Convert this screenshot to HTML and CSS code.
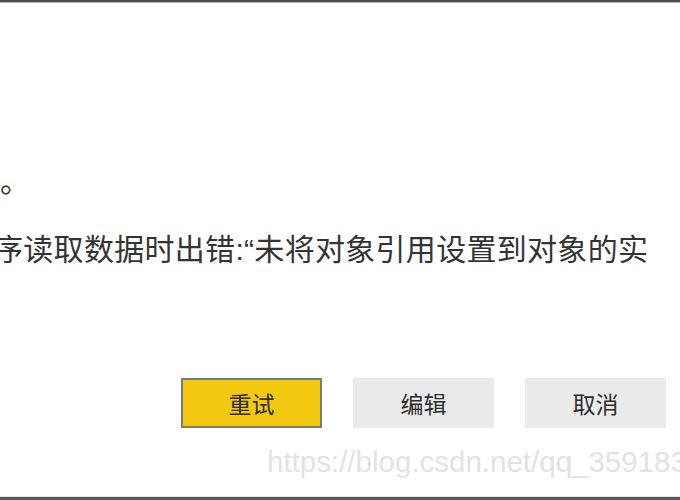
FILE: index.html
```html
<!DOCTYPE html>
<html lang="zh-CN">
<head>
    <meta charset="UTF-8">
    <meta name="viewport" content="width=device-width, initial-scale=1.0">
    <title>错误</title>
    <link rel="stylesheet" href="styles.css">
</head>
<body>
    <div class="dialog">
        <!-- 错误信息 -->
        <div class="message">
            <p class="line-end">。</p>
            <p class="line-error">序读取数据时出错<span class="punct">:“</span>未将对象引用设置到对象的实</p>
        </div>

        <!-- 按钮 -->
        <div class="actions">
            <button class="btn btn-primary">重试</button>
            <button class="btn">编辑</button>
            <button class="btn">取消</button>
        </div>

        <div class="watermark">https://blog.csdn.net/qq_35918388</div>
    </div>
</body>
</html>
```

FILE: styles.css
```css
html, body {
    margin: 0;
    padding: 0;
    background-color: #fff;
    overflow: hidden;
}
.dialog {
    height: 500px;
    box-sizing: border-box;
    border-top: 2px solid #4f4f4f;
    border-bottom: 3px solid #575757;
    box-shadow: inset 0 1px 0 #b5b5b5, inset 0 -1px 0 #e8e8e8;
    display: flex;
    flex-direction: column;
    overflow: hidden;
    font-family: "Noto Sans CJK SC", "Liberation Sans", sans-serif;
    color: #333;
}
.message {
    padding-top: 157px;
    white-space: nowrap;
}
.message p {
    margin: 0;
    font-size: 30px;
    line-height: 40px;
}
.line-error {
    margin-top: 28px !important;
    text-indent: -7px;
    letter-spacing: 0.3px;
}
.punct {
    font-family: "Liberation Sans", sans-serif;
}
.actions {
    display: flex;
    justify-content: flex-end;
    gap: 31px;
    padding-right: 14px;
    margin-top: auto;
}
.btn {
    width: 141px;
    height: 50px;
    box-sizing: border-box;
    border: none;
    background-color: #ebebeb;
    font-family: "Noto Sans CJK SC", sans-serif;
    font-size: 23px;
    color: #2e2e2e;
    padding: 0;
}
.btn-primary {
    background-color: #f2c811;
    border: 2px solid #7a7a7a;
}
.watermark {
    margin-top: 18px;
    margin-bottom: 19px;
    padding-left: 267px;
    white-space: nowrap;
    font-family: "Liberation Sans", Arial, sans-serif;
    font-size: 29.5px;
    line-height: 32px;
    color: #e3e3e3;
}
```
